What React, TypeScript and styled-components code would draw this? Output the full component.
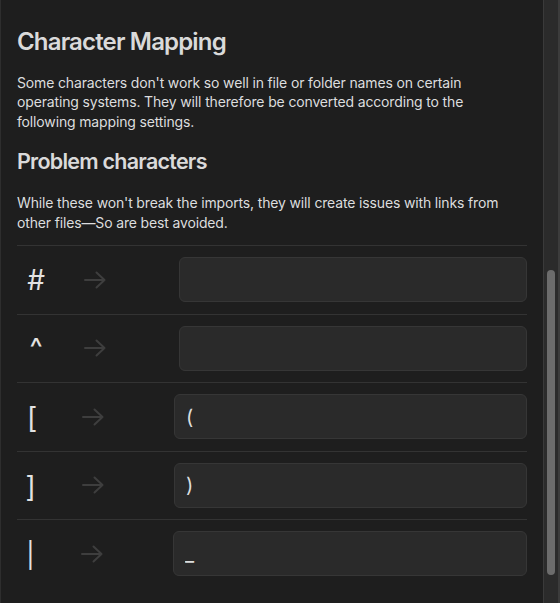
import React from "react";
import styled, { createGlobalStyle } from "styled-components";

const GlobalStyle = createGlobalStyle`
  html, body {
    margin: 0;
    padding: 0;
    background: #1e1e1e;
  }
  body {
    font-family: Inter, "Noto Sans", sans-serif;
    color: #dcddde;
  }
`;

const Page = styled.div`
  display: flex;
  height: 603px;
  overflow: hidden;
  border-left: 1px solid #2e2e2e;
  box-sizing: border-box;
`;

const Content = styled.div`
  flex: 1;
  padding: 28px 16px 0 16px;
`;

const Heading = styled.h2<{ $size: number; $gap: number }>`
  margin: 0 0 ${(p) => p.$gap}px;
  font-size: ${(p) => p.$size}px;
  line-height: 1.2;
  font-weight: 600;
  letter-spacing: -0.035em;
  color: #dadada;
`;

const Text = styled.p<{ $gap: number }>`
  margin: 0 0 ${(p) => p.$gap}px;
  max-width: 488px;
  font-size: 14px;
  line-height: 19.5px;
  letter-spacing: -0.15px;
  color: #dcddde;
`;

const Row = styled.div`
  display: flex;
  align-items: center;
  padding: 11.25px 0;
  border-top: 1px solid #333333;
`;

const Glyph = styled.span<{ $w: number; $dy: number; $size: number }>`
  width: ${(p) => p.$w}px;
  text-align: center;
  font-size: ${(p) => p.$size}px;
  line-height: 1;
  color: #e2e2e2;
  transform: translateY(${(p) => p.$dy}px);
`;

const Arrow = styled.svg<{ $ml: number }>`
  margin-left: ${(p) => p.$ml}px;
  flex: none;
`;

const Field = styled.input<{ $ml: number }>`
  flex: 1;
  min-width: 0;
  margin-left: ${(p) => p.$ml}px;
  height: 45px;
  box-sizing: border-box;
  padding: 0 11px;
  border: 1px solid #363636;
  border-radius: 6px;
  background: #2a2a2a;
  color: #dcddde;
  font-family: Inter, "Noto Sans", sans-serif;
  font-size: 20px;
  outline: none;
`;

const Track = styled.div`
  width: 14px;
  flex: none;
  background: #2b2b2b;
  border-left: 1px solid #3a3a3a;
  border-right: 2px solid #3c3c3c;
  box-sizing: content-box;
  padding-top: 270px;
`;

const Thumb = styled.div`
  width: 8px;
  height: 305px;
  margin-left: 3px;
  border-radius: 4px;
  background: #6c6c6c;
`;

type Mapping = {
  ch: string;
  to: string;
  w: number;
  dy: number;
  size: number;
  arrow: number;
  gap: number;
};

const rows: Mapping[] = [
  { ch: "#", to: "", w: 38, dy: 0, size: 28, arrow: 29, gap: 73 },
  { ch: "^", to: "", w: 38, dy: 0, size: 28, arrow: 29, gap: 73 },
  { ch: "[", to: "(", w: 30, dy: 1, size: 28, arrow: 35, gap: 70 },
  { ch: "]", to: ")", w: 27, dy: 2, size: 28, arrow: 38, gap: 70 },
  { ch: "|", to: "_", w: 27, dy: 2, size: 25, arrow: 37, gap: 70 },
];

const ArrowIcon = ({ ml }: { ml: number }) => (
  <Arrow $ml={ml} width="22" height="18" viewBox="0 0 22 18" fill="none">
    <path
      d="M1 9 H20.5 M12.5 1.5 L20.5 9 L12.5 16.5"
      stroke="#3e3e3e"
      strokeWidth="2"
      strokeLinecap="round"
      strokeLinejoin="round"
    />
  </Arrow>
);

export default function App() {
  return (
    <>
      <GlobalStyle />
      <Page>
        <Content>
          <Heading $size={24} $gap={16}>Character Mapping</Heading>
          <Text $gap={18}>
            Some characters don't work so well in file or folder names on certain
            operating systems. They will therefore be converted according to the
            following mapping settings.
          </Text>
          <Heading $size={21.5} $gap={18}>Problem characters</Heading>
          <Text $gap={13}>
            While these won't break the imports, they will create issues with links
            from other files—So are best avoided.
          </Text>
          {rows.map((r) => (
            <Row key={r.ch}>
              <Glyph $w={r.w} $dy={r.dy} $size={r.size}>{r.ch}</Glyph>
              <ArrowIcon ml={r.arrow} />
              <Field $ml={r.gap} defaultValue={r.to} />
            </Row>
          ))}
        </Content>
        <Track>
          <Thumb />
        </Track>
      </Page>
    </>
  );
}
